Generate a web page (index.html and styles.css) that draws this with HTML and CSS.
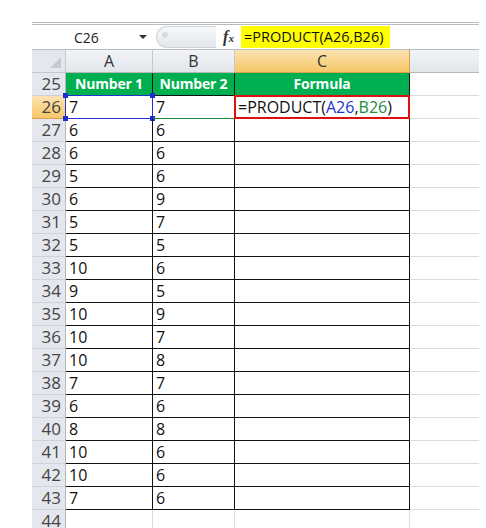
FILE: index.html
```html
<!DOCTYPE html>
<html lang="en">
<head>
  <meta charset="UTF-8" />
  <title>PRODUCT formula</title>
  <link rel="stylesheet" href="styles.css">
</head>
<body>

<div class="excel">
  <!-- formula bar -->
  <div class="fbar">
    <div class="namebox">
      <span class="ref">C26</span>
      <span class="arrow"></span>
    </div>
    <div class="pill"><span class="dot"></span></div>
    <div class="fx"><i>f</i><span>x</span></div>
    <div class="finput"><span class="ftext">=PRODUCT(A26,B26)</span></div>
  </div>

  <!-- sheet -->
  <div class="sheet" id="sheet">
    <div class="corner"><span class="tri"></span></div>
    <div class="colhead">A</div>
    <div class="colhead">B</div>
    <div class="colhead sel">C</div>
    <div class="colhead last"></div>

    <div class="rowhead">25</div>
    <div class="cell th">Number 1</div>
    <div class="cell th">Number 2</div>
    <div class="cell th">Formula</div>
    <div class="cell blank"></div>

    <div class="rowhead sel">26</div>
    <div class="cell t refa">7<span class="h h1"></span><span class="h h2"></span><span class="h h3"></span><span class="h h4"></span></div>
    <div class="cell t refb">7</div>
    <div class="cell t active">=PRODUCT(<span class="ca">A26</span>,<span class="cb">B26</span>)</div>
    <div class="cell blank"></div>
  </div>
</div>

<script>
  const rows = [
    [27, 6, 6], [28, 6, 6], [29, 5, 6], [30, 6, 9], [31, 5, 7],
    [32, 5, 5], [33, 10, 6], [34, 9, 5], [35, 10, 9], [36, 10, 7],
    [37, 10, 8], [38, 7, 7], [39, 6, 6], [40, 8, 8], [41, 10, 6],
    [42, 10, 6], [43, 7, 6]
  ];
  const sheet = document.getElementById('sheet');

  function addCell(cls, text) {
    const div = document.createElement('div');
    div.className = cls;
    div.innerText = text;
    sheet.appendChild(div);
  }

  rows.forEach(r => {
    addCell('rowhead', r[0]);
    addCell('cell t', r[1]);
    addCell('cell t', r[2]);
    addCell('cell t', '');
    addCell('cell blank', '');
  });

  addCell('rowhead', 44);
  addCell('cell blank', '');
  addCell('cell blank', '');
  addCell('cell blank', '');
  addCell('cell blank', '');
</script>

</body>
</html>
```

FILE: styles.css
```css
body {
  margin: 0;
  background: white;
  font-family: "Open Sans", "Liberation Sans", sans-serif;
  overflow: hidden;
}

.excel {
  margin: 22px 0 0 32px;
  width: 447px;
}

/* formula bar */
.fbar {
  display: flex;
  align-items: center;
  height: 28px;
  border-top: 3px double #b9bcc1;
  border-bottom: 1px solid #b9bcc1;
  box-sizing: border-box;
  background: white;
}

.namebox {
  width: 121px;
  display: flex;
  align-items: center;
  font-size: 14px;
  color: #222;
}

.namebox .ref {
  margin-left: 42px;
}

.namebox .arrow {
  margin-left: 40px;
  width: 0;
  height: 0;
  border-left: 4px solid transparent;
  border-right: 4px solid transparent;
  border-top: 4px solid #333;
}

.pill {
  width: 60px;
  height: 22px;
  margin-left: 3px;
  border-radius: 11px 0 0 11px;
  background: linear-gradient(#f7f8f9, #e3e6ea);
  border: 1px solid #d0d3d8;
  border-right: none;
  box-sizing: border-box;
  position: relative;
}

.pill .dot {
  position: absolute;
  left: 5px;
  top: 5px;
  width: 6px;
  height: 6px;
  border-radius: 50%;
  background: #d6d9dd;
}

.fx {
  width: 25px;
  font-family: "Liberation Serif", serif;
  font-size: 16px;
  color: #333;
  text-align: center;
  font-weight: bold;
}

.fx i {
  font-style: italic;
}

.fx span {
  font-size: 11px;
  font-style: italic;
}

.finput {
  flex: 1;
  height: 100%;
  display: flex;
  align-items: center;
}

.ftext {
  background: #ffff00;
  height: 22px;
  line-height: 22px;
  padding: 0 4px 0 3px;
  width: 142px;
  font-size: 14.5px;
  color: #111;
}

/* grid */
.sheet {
  display: grid;
  grid-template-columns: 34px 87px 82px 175px 69px;
  grid-auto-rows: 23px;
  font-size: 16px;
}

.corner {
  background: #e4e8ee;
  border-right: 1px solid #c5c9cf;
  border-bottom: 1px solid #c5c9cf;
  position: relative;
}

.corner .tri {
  position: absolute;
  right: 4px;
  bottom: 4px;
  width: 0;
  height: 0;
  border-left: 11px solid transparent;
  border-bottom: 11px solid #c7cbd1;
}

.colhead {
  background: linear-gradient(#f2f4f7, #e2e6eb);
  border-right: 1px solid #c5c9cf;
  border-bottom: 1px solid #b4b8be;
  color: #333;
  text-align: center;
  line-height: 22px;
}

.colhead.sel {
  background: linear-gradient(#fbe3b2, #f6c766);
  border-right-color: #d6a24d;
  border-bottom-color: #d6a24d;
}

.colhead.last {
  border-right: none;
}

.rowhead {
  background: #e4e8ee;
  border-bottom: 1px solid #cfd3d9;
  border-right: 1px solid #b4b8be;
  color: #444;
  text-align: right;
  padding-right: 4px;
  line-height: 22px;
  font-size: 17px;
}

.rowhead.sel {
  background: linear-gradient(#fbe3b2, #f6c766);
  border-bottom-color: #d6a24d;
}

.cell {
  line-height: 22px;
  padding-left: 3px;
  position: relative;
  color: #111;
  white-space: nowrap;
}

.blank {
  border-right: 1px solid #dadcdf;
  border-bottom: 1px solid #dadcdf;
}

.sheet .cell.blank:nth-child(5n) {
  border-right: none;
}

.t {
  border-right: 1px solid #111;
  border-bottom: 1px solid #111;
}

.th {
  background: #00b050;
  color: white;
  font-weight: bold;
  text-align: center;
  padding-left: 0;
  border-right: 1px solid #111;
  border-bottom: 1px solid #111;
  font-size: 14px;
  letter-spacing: -0.2px;
}

.refa {
  border: 1px solid #2233cc;
  margin-left: -1px;
  margin-top: -1px;
}

.refb {
  border-bottom: 1px solid #1e8a3a;
}

.h {
  position: absolute;
  width: 5px;
  height: 5px;
  background: #1a2fd0;
}

.h1 { left: -3px; top: -3px; }
.h2 { right: -3px; top: -3px; }
.h3 { left: -3px; bottom: -3px; }
.h4 { right: -3px; bottom: -3px; }

.active {
  border: 2px solid #e01010;
  margin-left: -1px;
  margin-top: -1px;
  padding-left: 2px;
  line-height: 20px;
}

.ca {
  color: #2233cc;
}

.cb {
  color: #1e8a3a;
}
```
